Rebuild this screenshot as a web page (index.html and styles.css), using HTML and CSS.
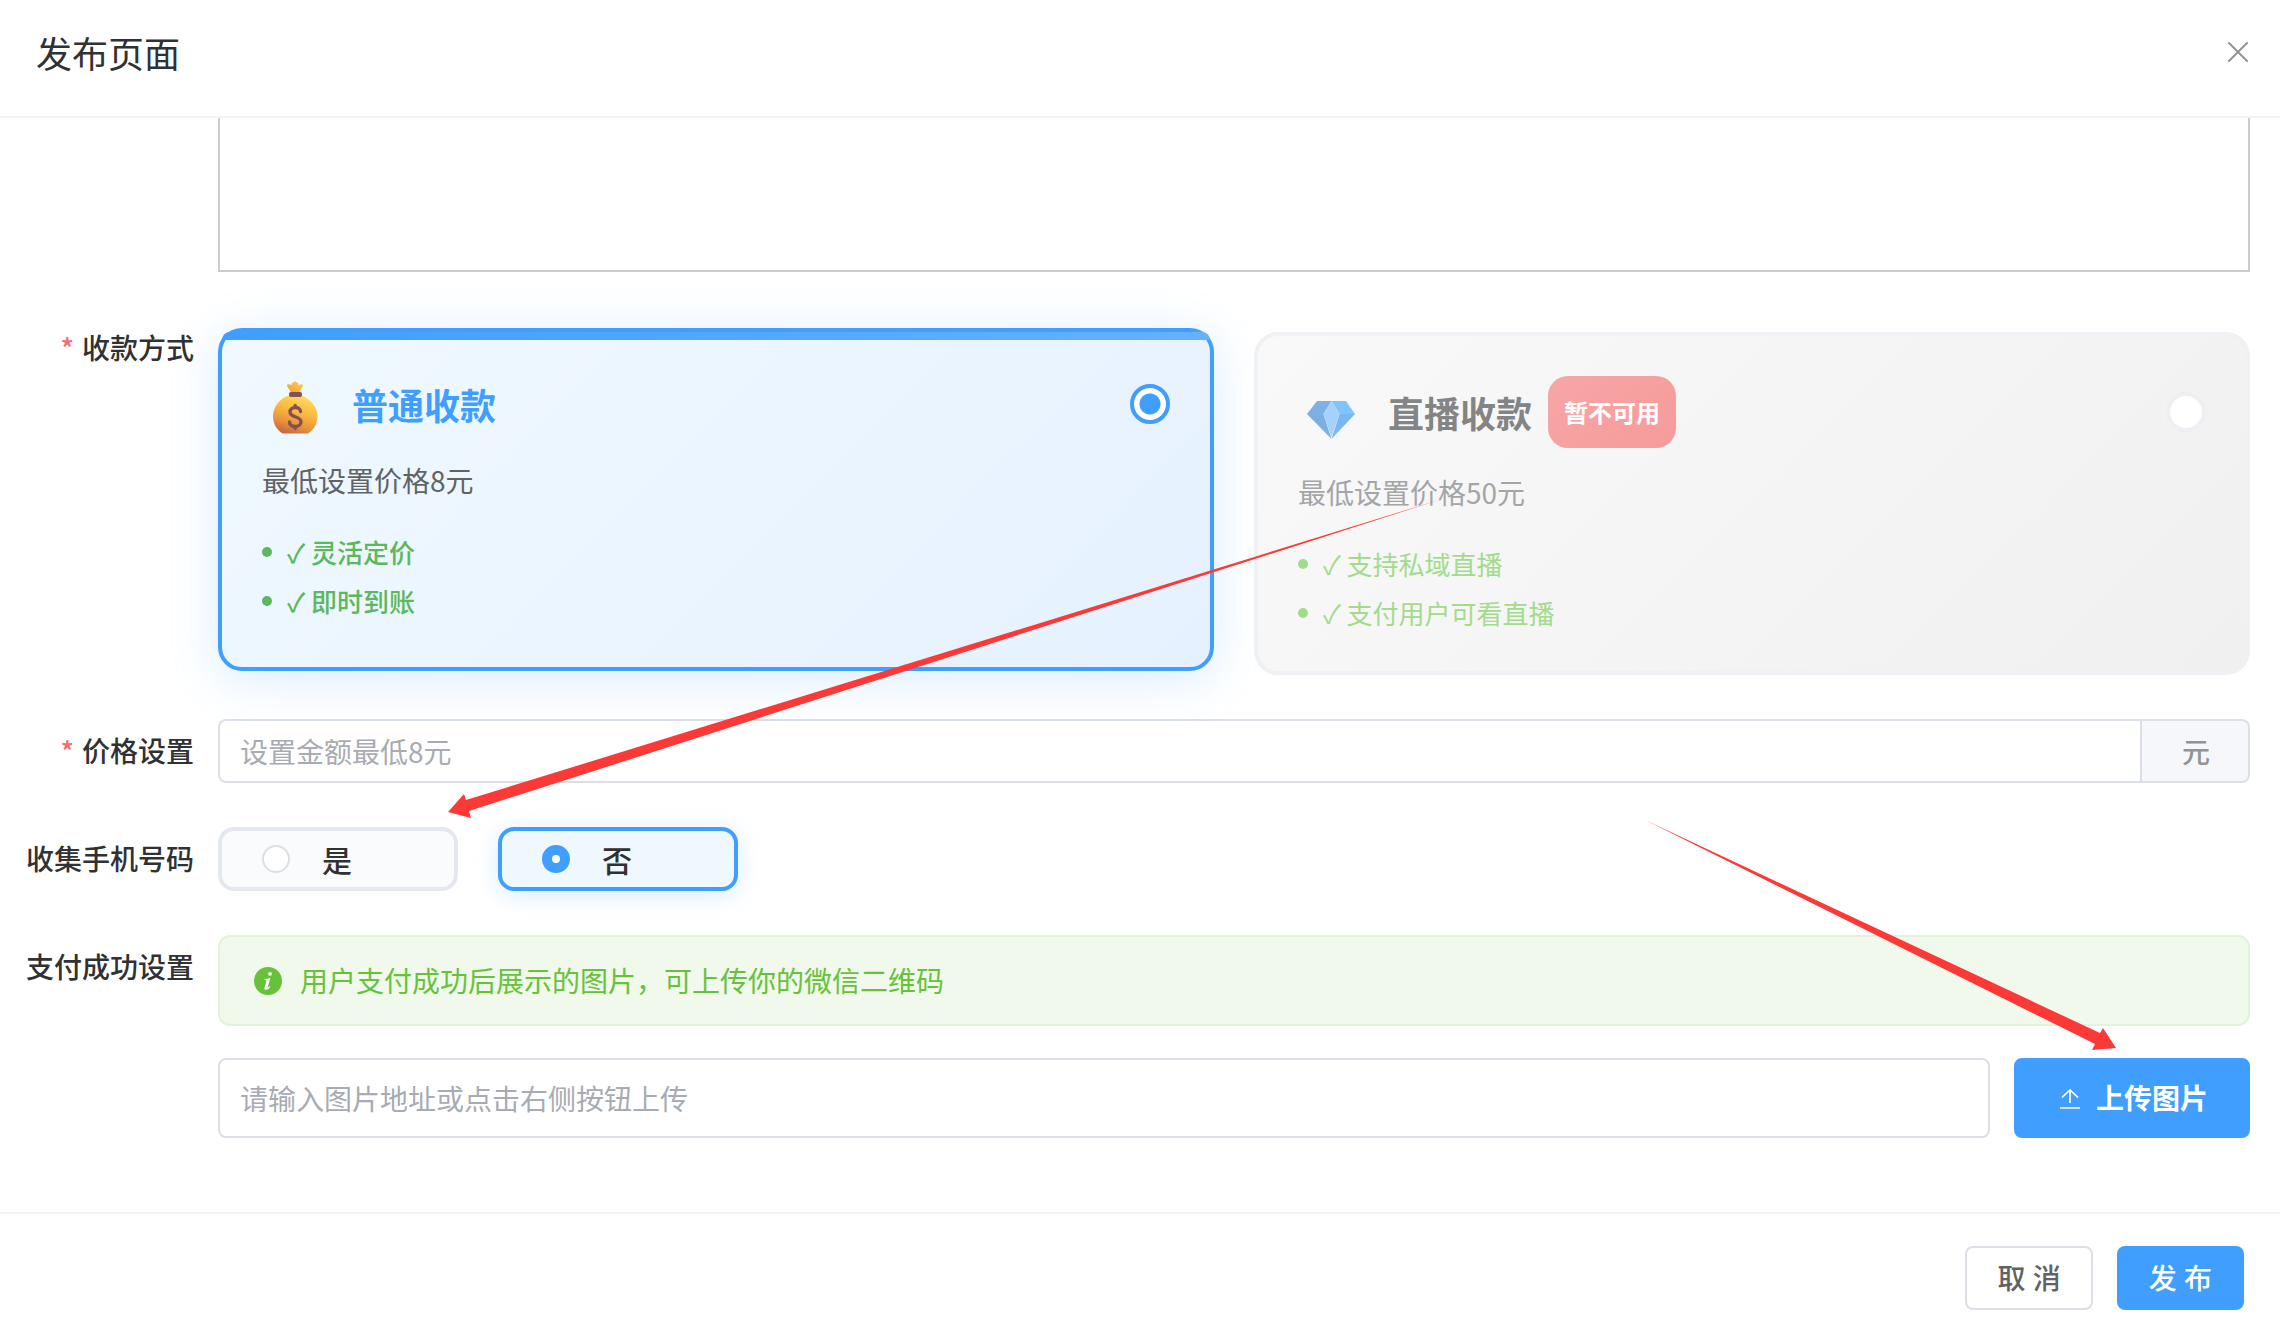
FILE: index.html
```html
<!DOCTYPE html>
<html lang="zh-CN">
<head>
<meta charset="utf-8">
<meta name="viewport" content="width=device-width, initial-scale=1">
<title>发布页面</title>
<link rel="stylesheet" href="styles.css">
</head>
<body>
<form class="dialog">
  <header class="dialog-header">
    <h1 class="dialog-title">发布页面</h1>
    <button class="close" type="button" aria-label="关闭">
      <svg width="20" height="20" viewBox="0 0 20 20" fill="none" stroke="#909399" stroke-width="2" stroke-linecap="round"><path d="M1 1l18 18M19 1L1 19"/></svg>
    </button>
  </header>

  <main class="dialog-body">
    <div class="form-item">
      <div class="form-label"></div>
      <textarea class="editor" aria-label="页面内容"></textarea>
    </div>

    <div class="form-item">
      <div class="form-label required" id="pay-label">收款方式</div>
      <div class="cards" role="radiogroup" aria-labelledby="pay-label">
        <section class="card card-active">
          <div class="card-header">
            <svg class="card-icon" width="66" height="64" viewBox="0 0 66 64">
              <defs>
                <linearGradient id="bag" x1="0.75" y1="0.1" x2="0.4" y2="1">
                  <stop offset="0" stop-color="#ffd75a"/><stop offset="0.4" stop-color="#f9b841"/><stop offset="0.75" stop-color="#e8923a"/><stop offset="1" stop-color="#cc6b40"/>
                </linearGradient>
                <linearGradient id="knot" x1="1" y1="0" x2="0" y2="1">
                  <stop offset="0" stop-color="#ffd052"/><stop offset="1" stop-color="#f39b39"/>
                </linearGradient>
              </defs>
              <path fill="url(#knot)" d="M28.500 20c0-2-3-4-3.500-6.500-.2-1.500 2-1.500 4.500-.5 0-2 2.300-3.500 3.500-3.500s3.500 1.500 3.500 3.500c2.500-1 4.700-1 4.500.5-.5 2.500-3.500 4.500-3.500 6.500z"/>
              <path fill="url(#bag)" d="M27 23.500h12C48 26 55.500 35 55.500 44c0 8-3.500 13.500-9.500 17.500H20.500c-6-4-9.500-9.500-9.500-17.500 0-9 7-18 16-20.500z"/>
              <rect x="27" y="20" width="13" height="5" rx="2" fill="#855052"/>
              <path fill="none" stroke="#855052" stroke-width="3.400" stroke-linecap="round" d="M38.500 39.500c0-2.500-2.300-4-5.300-4s-5.200 1.700-5.200 4.500c0 6 11 4 11 9.700 0 3-2.700 4.800-5.700 4.800-3.300 0-5.800-1.700-5.800-4.500M33.200 33.500v2M33.200 54.500v2"/>
            </svg>
            <label class="card-title" for="pay-normal">普通收款</label>
            <input class="card-radio" id="pay-normal" type="radio" name="pay" checked>
          </div>
          <p class="card-desc">最低设置价格8元</p>
          <ul class="features">
            <li>✓ 灵活定价</li>
            <li>✓ 即时到账</li>
          </ul>
        </section>
        <section class="card card-disabled">
          <div class="card-header">
            <svg class="card-icon" width="66" height="64" viewBox="0 0 66 64">
              <path fill="#7fb0e3" d="M19 21h14.500L25.500 34H9z"/>
              <path fill="#7cb0e4" d="M9 34h16.500l8 25z"/>
              <path fill="#7fc4fd" d="M33.500 21H48l9 13H41.500z"/>
              <path fill="#78b7f2" d="M57 34H41.500l-8 25z"/>
              <path fill="#a6d1fc" d="M33.500 21L41.500 34l-8 23-8-23z"/>
            </svg>
            <label class="card-title" for="pay-live">直播收款</label>
            <span class="badge">暂不可用</span>
            <input class="card-radio" id="pay-live" type="radio" name="pay" disabled>
          </div>
          <p class="card-desc">最低设置价格50元</p>
          <ul class="features">
            <li>✓ 支持私域直播</li>
            <li>✓ 支付用户可看直播</li>
          </ul>
        </section>
      </div>
    </div>

    <div class="form-item">
      <label class="form-label required" for="price">价格设置</label>
      <div class="input-group">
        <input class="input" id="price" type="text" placeholder="设置金额最低8元">
        <span class="input-append">元</span>
      </div>
    </div>

    <div class="form-item">
      <div class="form-label" id="phone-label">收集手机号码</div>
      <div class="options" role="radiogroup" aria-labelledby="phone-label">
        <label class="option"><input class="option-radio" type="radio" name="phone">是</label>
        <label class="option option-active"><input class="option-radio" type="radio" name="phone" checked>否</label>
      </div>
    </div>

    <div class="form-item">
      <label class="form-label" for="image-url">支付成功设置</label>
      <div class="success">
        <div class="alert">
          <svg width="28" height="28" viewBox="0 0 28 28"><circle cx="14" cy="14" r="14" fill="#67c23a"/><circle cx="16" cy="6.800" r="1.900" fill="#fff"/><path fill="#fff" d="M10.600 12.300l5.800-1.300-2.700 9.200c-.2.900.5.800 2-.9l.6.500c-1.600 2.200-2.900 3-4.200 3-1.500 0-2-1-1.600-2.400l1.800-6c.3-1-.1-1.400-1.700-1.400z"/></svg>
          <span>用户支付成功后展示的图片，可上传你的微信二维码</span>
        </div>
        <div class="upload">
          <input class="input upload-input" id="image-url" type="text" placeholder="请输入图片地址或点击右侧按钮上传">
          <button class="button button-primary upload-button" type="button">
            <svg width="28" height="28" viewBox="0 0 28 28" fill="none" stroke="#fff" stroke-width="1.700"><path d="M4 24h20M14 19V6M6 13.500L14 6l8 7.500"/></svg>
            上传图片
          </button>
        </div>
      </div>
    </div>
  </main>

  <footer class="dialog-footer">
    <button class="button" type="button">取 消</button>
    <button class="button button-primary" type="submit">发 布</button>
  </footer>
</form>

<svg class="arrows" viewBox="0 0 2280 1328" preserveAspectRatio="none" aria-hidden="true">
  <path d="M1442 499L466 800l-2-6-16 18 23 6-2-7z"/>
  <path d="M1645 820l455 213 3-5 13 20-24 2 3-6z"/>
</svg>
</body>
</html>
```

FILE: styles.css
```css
* {
  box-sizing: border-box;
}

body {
  position: relative;
  margin: 0;
  background: #fff;
  color: #303133;
  font: 28px/40px "Noto Sans CJK SC", "Noto Sans", sans-serif;
}

button,
input,
textarea {
  margin: 0;
  font: inherit;
}

.dialog {
  display: flex;
  flex-direction: column;
  min-height: 100vh;
}

.dialog-header {
  display: flex;
  align-items: center;
  justify-content: space-between;
  padding: 30px 32px 42px 36px;
  border-bottom: 2px solid #f0f2f5;
}

.dialog-title {
  margin: 0;
  font-size: 36px;
  font-weight: 400;
  line-height: 44px;
}

.close {
  display: flex;
  padding: 0;
  border: 0;
  background: none;
}

.dialog-body {
  display: flex;
  flex: 1;
  flex-direction: column;
  gap: 44px;
  padding: 0 30px 72px 0;
}

.form-item {
  display: grid;
  grid-template-columns: 218px minmax(0, 1fr);
}

.form-label {
  padding-right: 24px;
  font-weight: 500;
  line-height: 62px;
  text-align: right;
}

.required::before {
  content: "*";
  margin-right: 8px;
  color: #f56c6c;
}

.editor {
  display: block;
  width: 100%;
  height: 154px;
  border: 2px solid #ccc;
  border-top: 0;
  outline: 0;
  resize: none;
}

.cards {
  display: grid;
  grid-template-columns: 1fr 1fr;
  gap: 40px;
  margin-top: 16px;
}

.card {
  position: relative;
  padding: 40px;
  border: 4px solid;
  border-radius: 24px;
}

.card-active {
  top: -4px;
  border-color: #409eff;
  background: linear-gradient(135deg, #f0f9ff, #e6f1ff);
  box-shadow: 0 8px 50px rgba(64, 158, 255, 0.2);
}

.card-active::before {
  content: "";
  position: absolute;
  inset: 0 0 auto;
  height: 8px;
  border-radius: 20px 20px 0 0;
  background: linear-gradient(90deg, #409eff, #66b1ff);
}

.card-disabled {
  border-color: #f0f1f5;
  background: linear-gradient(135deg, #f9f9f9, #f0f0f0);
}

.card-header {
  display: flex;
  align-items: center;
  margin-bottom: 22px;
}

.card-icon {
  margin-right: 24px;
}

.card-title {
  font-size: 36px;
  font-weight: 700;
}

.card-active .card-title {
  color: #409eff;
}

.card-disabled .card-title {
  color: #838485;
}

.badge {
  margin-left: 16px;
  padding: 16px;
  border-radius: 20px;
  background: linear-gradient(135deg, #f7a6a6, #f69b9b);
  color: #fff;
  font-size: 24px;
  font-weight: 700;
}

.card-radio,
.option-radio {
  flex: none;
  appearance: none;
  border-radius: 50%;
  background: #fff;
}

.card-radio {
  width: 40px;
  height: 40px;
  margin-left: auto;
  border: 4px solid #edeff2;
}

.card-radio:checked {
  border-color: #409eff;
  background: radial-gradient(circle, #409eff 10px, #fff 11px);
}

.card-desc {
  margin: 0 0 31px;
  color: #606266;
  line-height: 44px;
}

.card-disabled .card-desc {
  color: #a4a5a7;
}

.features {
  display: grid;
  gap: 12px;
  margin: 0;
  padding: 0;
  list-style: none;
  color: #5cb85c;
  font-size: 26px;
  font-weight: 500;
  line-height: 37px;
}

.features li {
  display: flex;
  align-items: center;
  gap: 15px;
}

.features li::before {
  content: "";
  width: 10px;
  height: 10px;
  border-radius: 50%;
  background: currentColor;
}

.card-disabled .features {
  color: #a2dc8b;
  font-weight: 400;
}

.input {
  display: block;
  width: 100%;
  min-width: 0;
  height: 64px;
  padding: 0 20px;
  border: 2px solid #dcdfe6;
  border-radius: 8px;
  outline: 0;
  background: #fff;
  color: #606266;
}

.input::placeholder {
  color: #a8abb2;
  opacity: 1;
}

.input-group {
  display: flex;
}

.input-group .input {
  border-right: 0;
  border-radius: 8px 0 0 8px;
}

.input-append {
  padding: 0 38px 0 40px;
  border: 2px solid #dcdfe6;
  border-radius: 0 8px 8px 0;
  background: #f5f7fa;
  color: #909399;
  font-weight: 500;
  line-height: 60px;
}

.options {
  display: flex;
  gap: 40px;
}

.option {
  display: flex;
  align-items: center;
  gap: 32px;
  width: 240px;
  height: 64px;
  padding: 0 40px;
  border: 4px solid #e4e7ed;
  border-radius: 16px;
  background: #fafbfc;
  font-size: 30px;
  font-weight: 500;
}

.option-active {
  border-color: #409eff;
  background: #eff7ff;
  box-shadow: 0 4px 24px rgba(64, 158, 255, 0.2);
}

.option-radio {
  width: 28px;
  height: 28px;
  border: 2px solid #dcdfe6;
}

.option-radio:checked {
  border: 10px solid #409eff;
}

.alert {
  display: flex;
  align-items: center;
  gap: 18px;
  margin-bottom: 32px;
  padding: 24px 34px;
  border: 2px solid #e1f3d8;
  border-radius: 12px;
  background: #f0f9eb;
  color: #67c23a;
  line-height: 39px;
}

.upload {
  display: flex;
  gap: 24px;
}

.upload-input {
  height: 80px;
}

.button {
  display: flex;
  align-items: center;
  justify-content: center;
  gap: 12px;
  height: 64px;
  padding: 0 30px;
  border: 2px solid #dcdfe6;
  border-radius: 8px;
  background: #fff;
  color: #606266;
  font-family: "Noto Sans", "Noto Sans CJK SC", sans-serif;
  font-weight: 500;
  white-space: nowrap;
}

.button-primary {
  border-color: #409eff;
  background: #409eff;
  color: #fff;
}

.upload-button {
  height: 80px;
  padding: 0 40px;
  font-weight: 600;
}

.dialog-footer {
  display: flex;
  justify-content: flex-end;
  gap: 24px;
  padding: 32px 36px 18px;
  border-top: 2px solid #f0f2f5;
}

.arrows {
  position: absolute;
  inset: 0;
  width: 100%;
  height: 100%;
  fill: #fb3a38;
  pointer-events: none;
}
```
